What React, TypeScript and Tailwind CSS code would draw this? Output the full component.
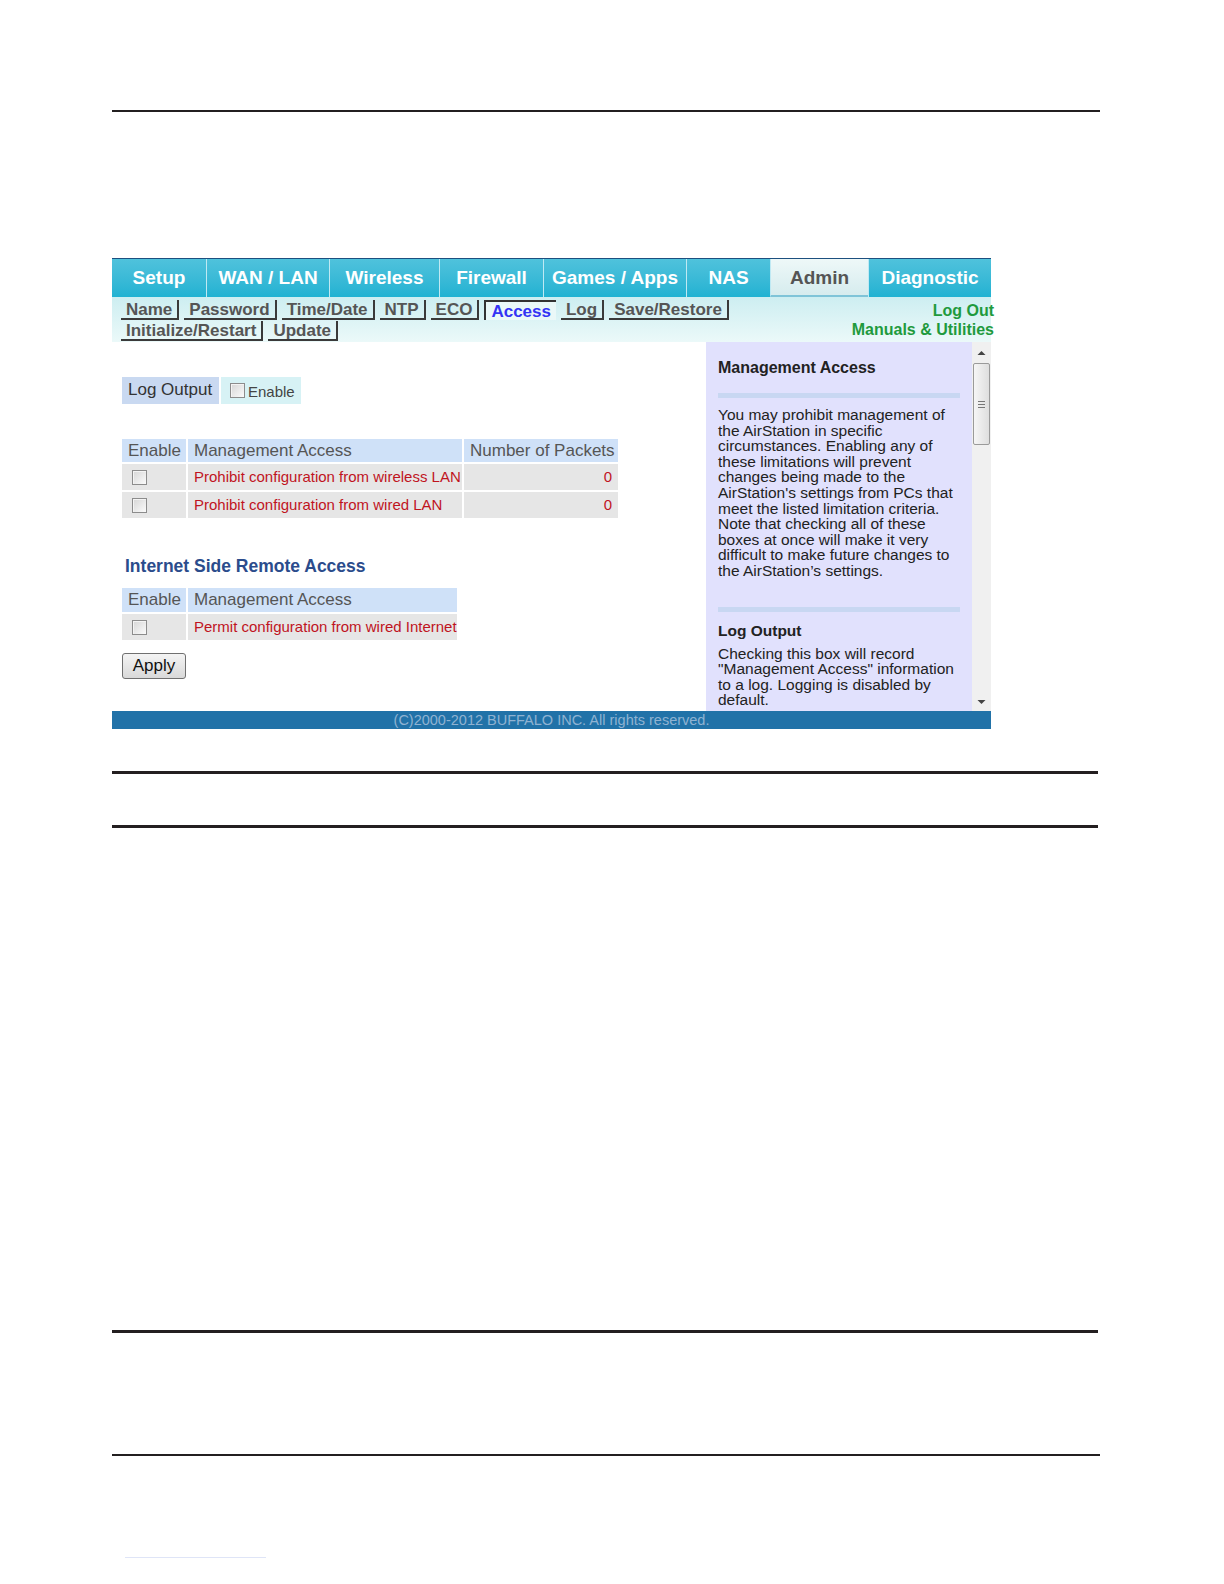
import React from 'react';

const tabs = [
  { label: 'Setup', w: 'w-[94px]' },
  { label: 'WAN / LAN', w: 'w-[123px]' },
  { label: 'Wireless', w: 'w-[110px]' },
  { label: 'Firewall', w: 'w-[104px]' },
  { label: 'Games / Apps', w: 'w-[143px]' },
  { label: 'NAS', w: 'w-[84px]' },
  { label: 'Admin', w: 'w-[98px]', active: true },
  { label: 'Diagnostic', w: 'w-[123px]' },
];

const subRow1 = ['Name', 'Password', 'Time/Date', 'NTP', 'ECO', 'Access', 'Log', 'Save/Restore'];
const subRow2 = ['Initialize/Restart', 'Update'];

const helpText1 = [
  'You may prohibit management of',
  'the AirStation in specific',
  'circumstances. Enabling any of',
  'these limitations will prevent',
  'changes being made to the',
  "AirStation's settings from PCs that",
  'meet the listed limitation criteria.',
  'Note that checking all of these',
  'boxes at once will make it very',
  'difficult to make future changes to',
  'the AirStation’s settings.',
];

const helpText2 = [
  'Checking this box will record',
  '"Management Access" information',
  'to a log. Logging is disabled by',
  'default.',
];

function Check() {
  return (
    <input
      type="checkbox"
      className="appearance-none w-[15px] h-[15px] border border-[#8c8c8c] bg-gradient-to-br from-[#d6d6d6] to-[#fbfbfb] shadow-[inset_1px_1px_0_#f4f4f4] m-0"
    />
  );
}

function SubItem({ label }: { label: string }) {
  const active = label === 'Access';
  return (
    <span
      className={
        active
          ? 'h-[20px] px-[5px] leading-[19px] border-l-2 border-t-2 border-[#333] text-[#3434f4] bg-[#eaf8f8]'
          : 'h-[20px] px-[5px] leading-[19px] border-r-2 border-b-2 border-[#3a3a3a] text-[#555]'
      }
    >
      {label}
    </span>
  );
}

function RouterScreen() {
  return (
    <div className="w-[879px] border-t border-[#1d4f7f] font-['Liberation_Sans',Arial,sans-serif]">
      {/* top tabs */}
      <div className="flex h-[38px] bg-gradient-to-b from-[#4fc2dc] to-[#1fb2d2]">
        {tabs.map((t, i) => (
          <div
            key={t.label}
            className={`${t.w} ${i > 0 ? 'border-l border-[#bfe9f3]' : ''} flex items-center justify-center text-[19px] font-bold ${
              t.active
                ? 'bg-gradient-to-b from-[#eef8f8] to-[#d6ecee] text-[#555] border-b-2 border-b-[#7fc4d8] pt-[2px]'
                : 'text-white'
            }`}
          >
            {t.label}
          </div>
        ))}
      </div>

      {/* sub nav */}
      <div className="h-[45px] flex justify-between bg-gradient-to-b from-[#cdeef1] to-[#ebf9f9] pl-[9px] pt-[3px]">
        <div className="flex flex-col gap-[1px] text-[17px] font-bold">
          <div className="flex gap-[5px]">
            {subRow1.map((s) => (
              <SubItem key={s} label={s} />
            ))}
          </div>
          <div className="flex gap-[5px]">
            {subRow2.map((s) => (
              <SubItem key={s} label={s} />
            ))}
          </div>
        </div>
        <div className="flex flex-col items-end text-[16px] font-bold text-[#1f9a3d] leading-[19px] pt-[1px] mr-[-3px] whitespace-nowrap">
          <span>Log Out</span>
          <span>Manuals &amp; Utilities</span>
        </div>
      </div>

      {/* content */}
      <div className="flex h-[369px]">
        <div className="w-[594px] bg-white pl-[10px] pt-[35px]">
          <div className="flex gap-[2px] h-[27px]">
            <div className="w-[97px] bg-[#c9d9f1] text-[17px] text-[#333] pl-[6px] leading-[26px]">Log Output</div>
            <div className="w-[80px] bg-[#d7f2f5] flex items-center pl-[9px] gap-[3px]">
              <Check />
              <span className="text-[15px] text-[#444] pt-[4px]">Enable</span>
            </div>
          </div>

          <div className="grid grid-cols-[64px_274px_154px] gap-[2px] mt-[35px]">
            <div className="h-[23px] bg-[#cfe1f8] text-[17px] text-[#555] pl-[6px] leading-[23px]">Enable</div>
            <div className="h-[23px] bg-[#cfe1f8] text-[17px] text-[#555] pl-[6px] leading-[23px]">Management Access</div>
            <div className="h-[23px] bg-[#cfe1f8] text-[17px] text-[#555] pl-[6px] leading-[23px]">Number of Packets</div>
            {['Prohibit configuration from wireless LAN', 'Prohibit configuration from wired LAN'].map((r) => (
              <React.Fragment key={r}>
                <div className="h-[26px] bg-[#e6e6e6] flex items-center pl-[10px]">
                  <Check />
                </div>
                <div className="h-[26px] bg-[#e6e6e6] text-[15px] text-[#c0141e] pl-[6px] leading-[26px] whitespace-nowrap">{r}</div>
                <div className="h-[26px] bg-[#e6e6e6] text-[15px] text-[#c0141e] pr-[6px] leading-[26px] text-right">0</div>
              </React.Fragment>
            ))}
          </div>

          <h3 className="mt-[38px] pl-[3px] text-[17.5px] font-bold text-[#2b4c8c] leading-[20px]">Internet Side Remote Access</h3>

          <div className="grid grid-cols-[64px_269px] gap-[2px] mt-[12px]">
            <div className="h-[24px] bg-[#cfe1f8] text-[17px] text-[#555] pl-[6px] leading-[24px]">Enable</div>
            <div className="h-[24px] bg-[#cfe1f8] text-[17px] text-[#555] pl-[6px] leading-[24px]">Management Access</div>
            <div className="h-[26px] bg-[#e6e6e6] flex items-center pl-[10px]">
              <Check />
            </div>
            <div className="h-[26px] bg-[#e6e6e6] text-[15px] text-[#c0141e] pl-[6px] leading-[26px] whitespace-nowrap">
              Permit configuration from wired Internet
            </div>
          </div>

          <button
            type="button"
            className="mt-[13px] w-[64px] h-[26px] rounded-[3px] border border-[#707070] bg-gradient-to-b from-[#f4f4f4] to-[#d9d9d9] text-[17px] text-[#111] leading-[22px]"
          >
            Apply
          </button>
        </div>

        {/* help panel */}
        <div className="w-[266px] bg-[#e1e1fd] pl-[12px] pr-[12px] pt-[17px] text-[#222]">
          <div className="text-[16px] font-bold leading-[18px]">Management Access</div>
          <div className="mt-[16px] h-[5px] w-[242px] bg-[#c8d7f2]" />
          <div className="mt-[9px] text-[15.5px] leading-[15.6px] whitespace-nowrap">
            {helpText1.map((l) => (
              <div key={l}>{l}</div>
            ))}
          </div>
          <div className="mt-[28px] h-[5px] w-[242px] bg-[#c8d7f2]" />
          <div className="mt-[10px] text-[15.5px] font-bold leading-[18px]">Log Output</div>
          <div className="mt-[6px] text-[15.5px] leading-[15.6px] whitespace-nowrap">
            {helpText2.map((l) => (
              <div key={l}>{l}</div>
            ))}
          </div>
        </div>

        {/* scrollbar */}
        <div className="w-[19px] bg-[#f0f0f0] flex flex-col items-center">
          <svg width="9" height="6" viewBox="0 0 9 6" className="mt-[8px]">
            <path d="M0.5 5 L4.5 1 L8.5 5 Z" fill="#444" />
          </svg>
          <div className="mt-[7px] w-[17px] h-[82px] rounded-[2px] border border-[#9a9a9a] bg-gradient-to-r from-[#f6f6f6] to-[#dedede] flex flex-col items-center justify-center gap-[2px]">
            <div className="w-[7px] h-[1px] bg-[#777]" />
            <div className="w-[7px] h-[1px] bg-[#777]" />
            <div className="w-[7px] h-[1px] bg-[#777]" />
          </div>
          <div className="flex-1" />
          <svg width="9" height="6" viewBox="0 0 9 6" className="mb-[6px]">
            <path d="M0.5 1 L4.5 5 L8.5 1 Z" fill="#444" />
          </svg>
        </div>
      </div>

      {/* footer */}
      <div className="h-[18px] bg-[#2172a8] text-center text-[14.5px] leading-[18px] text-[#8fb2d2]">
        (C)2000-2012 BUFFALO INC. All rights reserved.
      </div>
    </div>
  );
}

export default function App() {
  return (
    <div className="w-[1224px] h-[1584px] bg-white pl-[112px] pt-[110px]">
      <div className="w-[988px] h-[2px] bg-[#231f20]" />
      <div className="mt-[146px]">
        <RouterScreen />
      </div>
      <div className="mt-[42px] w-[986px] h-[3px] bg-[#231f20]" />
      <div className="mt-[51px] w-[986px] h-[3px] bg-[#231f20]" />
      <div className="mt-[502px] w-[986px] h-[3px] bg-[#231f20]" />
      <div className="mt-[121px] w-[988px] h-[2px] bg-[#231f20]" />
      <div className="mt-[101px] ml-[13px] w-[141px] h-[1px] bg-[#dfe5f7]" />
    </div>
  );
}
